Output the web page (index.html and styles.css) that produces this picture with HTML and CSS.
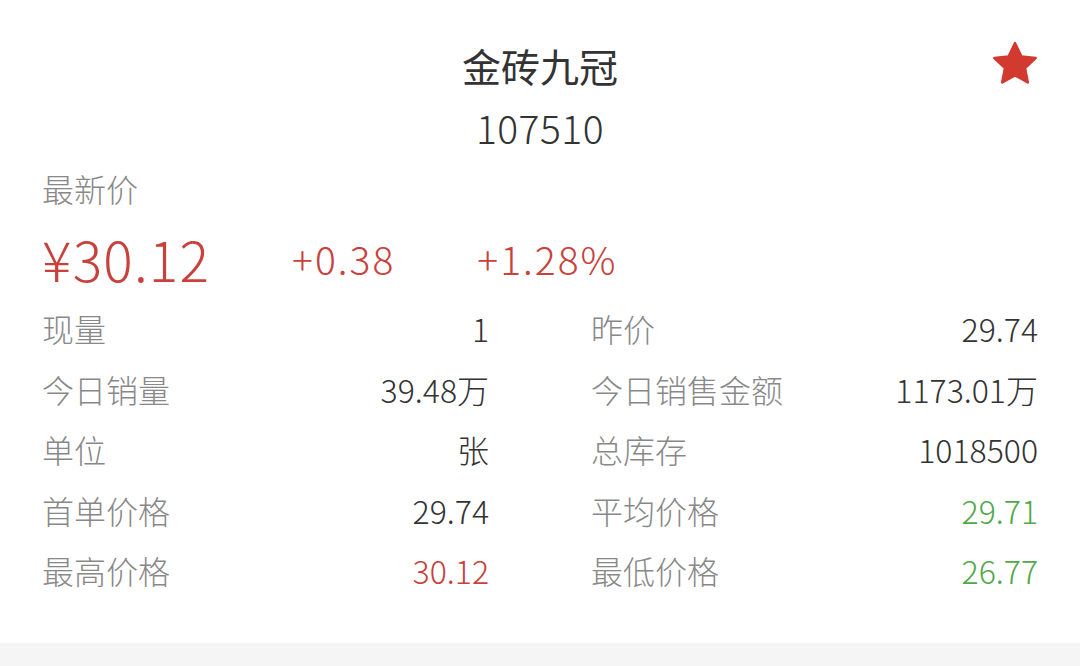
FILE: index.html
```html
<!DOCTYPE html>
<html lang="zh-CN">
<head>
  <meta charset="UTF-8" />
  <meta name="viewport" content="width=device-width, initial-scale=1.0" />
  <title>金砖九冠</title>
  <link rel="stylesheet" href="styles.css">
</head>
<body>
  <div class="card">
    <header class="head">
      <h1 class="name">金砖九冠</h1>
      <div class="code">107510</div>
      <svg class="star" viewBox="0 0 24 24" width="52" height="52">
        <path d="M12 2.4l2.9 6.1 6.6.8-4.9 4.6 1.3 6.6L12 17.2l-5.9 3.3 1.3-6.6-4.9-4.6 6.6-.8z" fill="#d23a30" stroke="#d23a30" stroke-width="1.2" stroke-linejoin="round"/>
      </svg>
    </header>

    <div class="label">最新价</div>
    <div class="price-row">
      <span class="price">¥30.12</span>
      <span class="change">+0.38</span>
      <span class="change">+1.28%</span>
    </div>

    <div class="stats">
      <div class="stat"><span class="key">现量</span><span class="val">1</span></div>
      <div class="stat"><span class="key">昨价</span><span class="val">29.74</span></div>
      <div class="stat"><span class="key">今日销量</span><span class="val">39.48万</span></div>
      <div class="stat"><span class="key">今日销售金额</span><span class="val">1173.01万</span></div>
      <div class="stat"><span class="key">单位</span><span class="val">张</span></div>
      <div class="stat"><span class="key">总库存</span><span class="val">1018500</span></div>
      <div class="stat"><span class="key">首单价格</span><span class="val">29.74</span></div>
      <div class="stat"><span class="key">平均价格</span><span class="val up-green">29.71</span></div>
      <div class="stat"><span class="key">最高价格</span><span class="val up-red">30.12</span></div>
      <div class="stat"><span class="key">最低价格</span><span class="val up-green">26.77</span></div>
    </div>
  </div>
  <div class="footer-strip"></div>
</body>
</html>
```

FILE: styles.css
```css
body {
  margin: 0;
  background: #fff;
  font-family: "Noto Sans CJK SC", "Noto Sans", sans-serif;
  font-weight: 300;
  color: #333;
}

.card {
  height: 643px;
  padding: 34px 42px 0;
  box-sizing: border-box;
}

.head {
  position: relative;
  text-align: center;
}

.name {
  margin: 0;
  font-size: 39px;
  font-weight: 400;
  line-height: 62px;
  color: #333;
}

.code {
  font-size: 39px;
  letter-spacing: 0.5px;
  line-height: 62px;
  color: #333;
}

.star {
  position: absolute;
  top: 4px;
  right: -3px;
}

.label {
  font-size: 32px;
  line-height: 60px;
  color: #888;
}

.price-row {
  display: flex;
  align-items: center;
  gap: 82px;
  height: 80px;
  color: #c8413b;
}

.price {
  font-size: 55px;
  letter-spacing: 1.2px;
}

.change {
  font-size: 39px;
  letter-spacing: 2px;
}

.stats {
  display: grid;
  grid-template-columns: 1fr 1fr;
  column-gap: 102px;
}

.stat {
  display: flex;
  justify-content: space-between;
  align-items: center;
  height: 60.5px;
  font-size: 32px;
}

.key {
  color: #888;
}

.val {
  color: #333;
}

.up-red {
  color: #c8413b;
}

.up-green {
  color: #4fa84a;
}

.footer-strip {
  height: 23px;
  background: #f5f5f5;
}
```
